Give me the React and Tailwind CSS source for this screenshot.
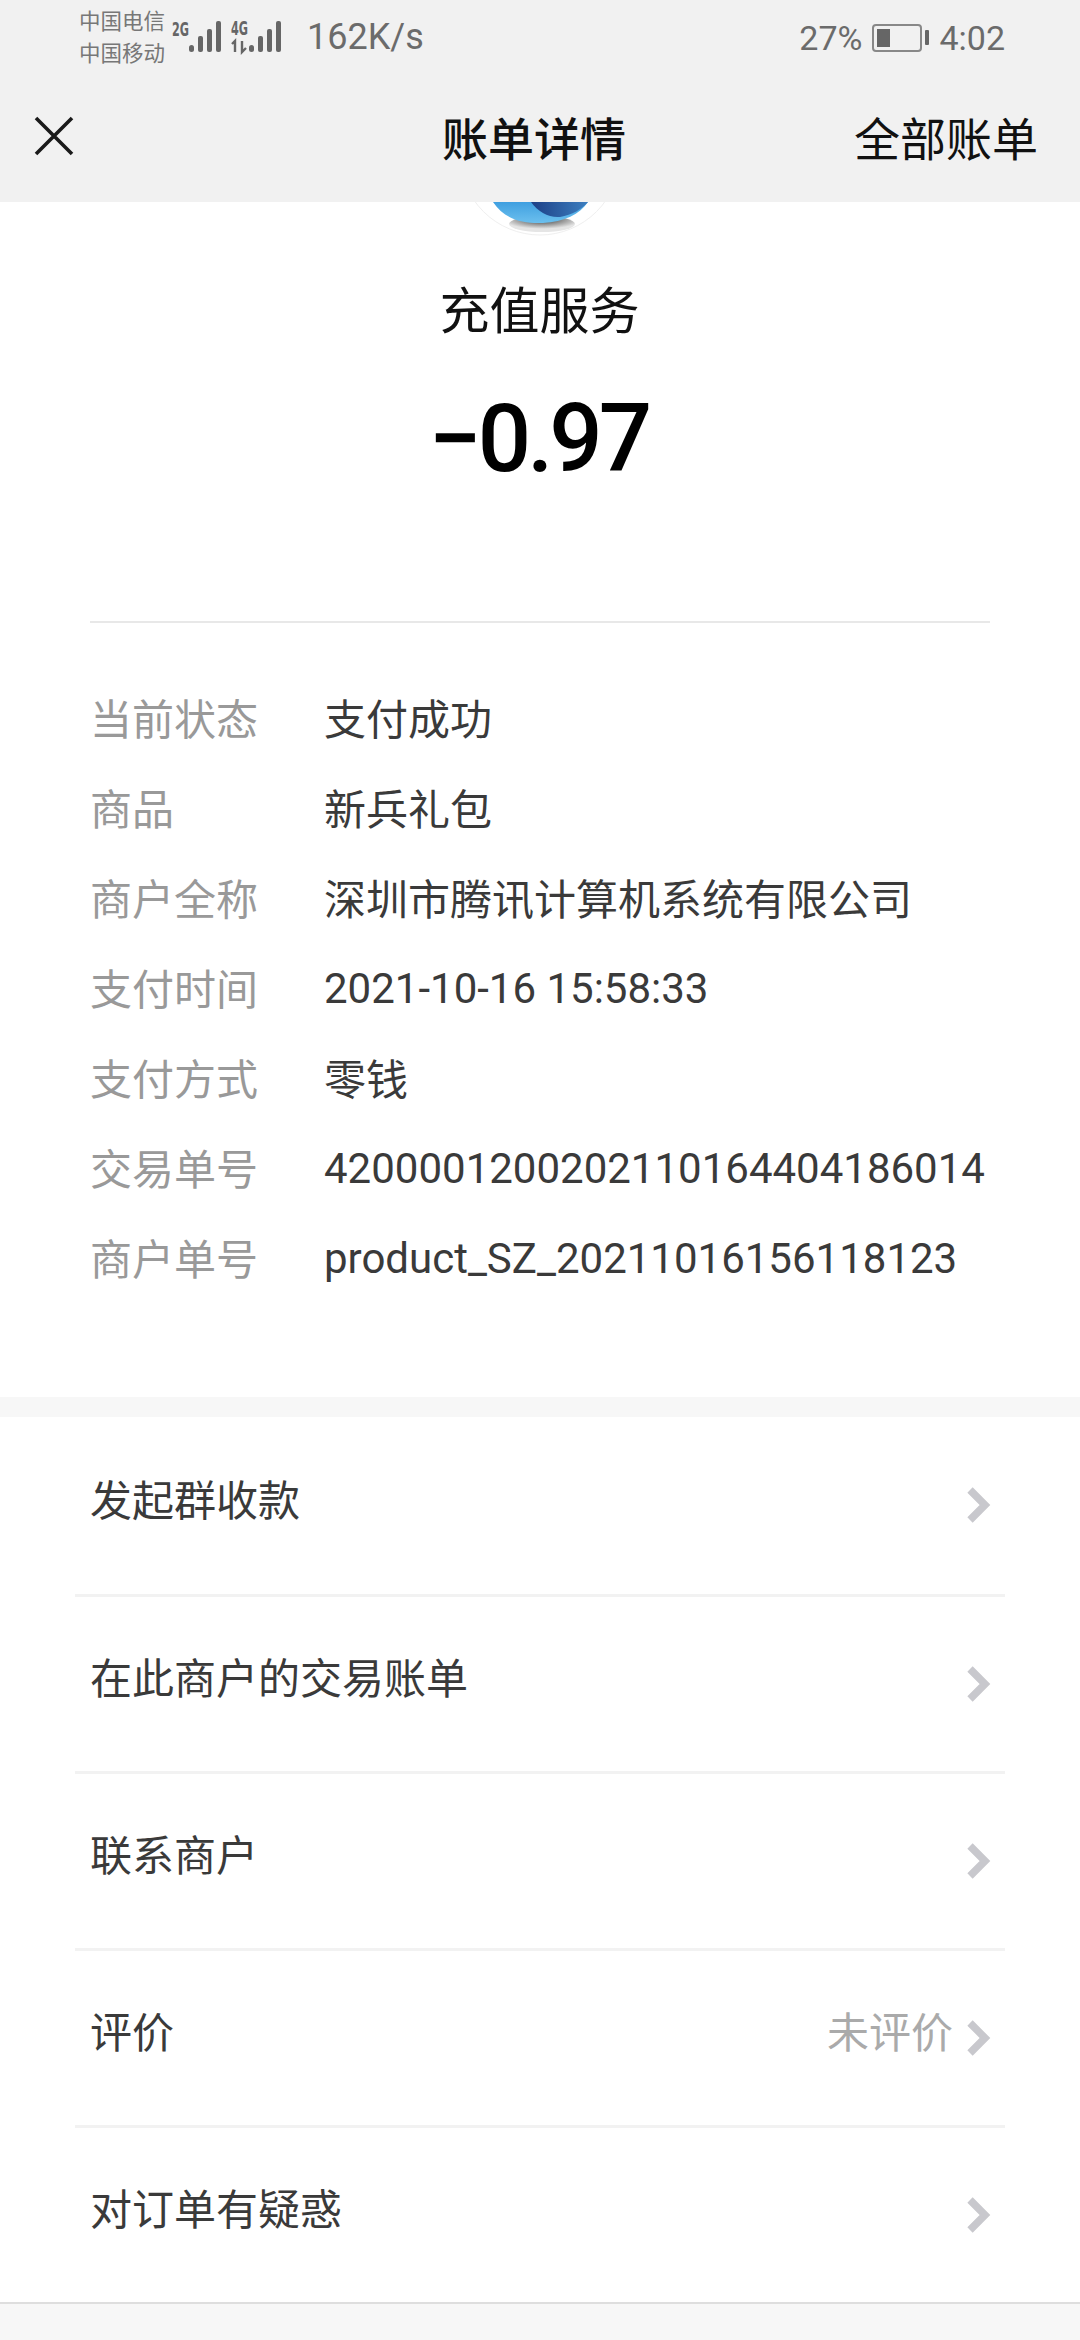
const cjk = { fontFamily: '"Noto Sans CJK SC", Roboto, sans-serif' };
const lat = { fontFamily: 'Roboto, "Noto Sans CJK SC", sans-serif' };

function Bars({ x = 0 }) {
  return (
    <g transform={`translate(${x} 0)`} fill="#666">
      <rect x={0} y={45} width={5} height={7} rx={2.5} />
      <rect x={9} y={36} width={5} height={16} rx={2} />
      <rect x={18} y={29} width={5} height={23} rx={2} />
      <rect x={27} y={21} width={5} height={31} rx={2} />
    </g>
  );
}

function StatusBar() {
  return (
    <div className="h-[75px] relative flex items-center text-[#666]">
      <div className="ml-[79px] w-[92px] flex flex-col text-[21.5px] leading-[32px] text-[#777] mb-[3px]" style={cjk}>
        <span className="whitespace-nowrap">中国电信</span>
        <span className="whitespace-nowrap">中国移动</span>
      </div>
      <svg width="110" height="75" viewBox="165 0 110 75" className="shrink-0">
        <text x="166" y="36" fontSize="20" fontWeight="700" fill="#666" textLength="17" lengthAdjust="spacingAndGlyphs" fontFamily="DejaVu Sans Condensed">2G</text>
        <Bars x={183} />
        <text x="225" y="35" fontSize="19" fontWeight="700" fill="#666" textLength="17" lengthAdjust="spacingAndGlyphs" fontFamily="DejaVu Sans Condensed">4G</text>
        <path d="M229 52V41L226 44M236 41V52L240 48" stroke="#666" strokeWidth="2.4" fill="none" />
        <Bars x={243} />
      </svg>
      <span className="ml-[26px] text-[36px] leading-none text-[#6b6b6b] mb-[1px]" style={lat}>162K/s</span>
      <div className="ml-auto mr-[75px] flex items-center">
        <span className="text-[34px] leading-none text-[#6b6b6b]" style={lat}>27%</span>
        <div className="ml-[10px] w-[50px] h-[28px] rounded-[4px] border-2 border-[#888] p-[3px] flex">
          <div className="w-[13px] bg-[#666]" />
        </div>
        <div className="ml-[3px] w-[4px] h-[15px] bg-[#666] rounded-[1px]" />
        <span className="ml-[10px] text-[34px] leading-none text-[#6b6b6b]" style={lat}>4:02</span>
      </div>
    </div>
  );
}

function NavBar() {
  return (
    <div className="h-[127px] relative flex items-center justify-between pl-[34px] pr-[42px] pb-[6px]">
      <svg width="40" height="40" viewBox="0 0 40 40" className="shrink-0">
        <path d="M2 2L38 38M38 2L2 38" stroke="#1a1a1a" strokeWidth="3.6" fill="none" />
      </svg>
      <span className="absolute left-[442px] text-[46px] leading-none font-medium text-[#111]" style={cjk}>账单详情</span>
      <span className="text-[46px] leading-none text-[#111]" style={cjk}>全部账单</span>
    </div>
  );
}

function Logo() {
  return (
    <div className="h-[34px] overflow-hidden flex justify-center">
      <svg width="170" height="34" viewBox="457 202 170 34" className="shrink-0">
        <defs>
          <linearGradient id="lb" x1="0" y1="0" x2="0" y2="1">
            <stop offset="0" stopColor="#3f9fe0" />
            <stop offset="1" stopColor="#6cc0ee" />
          </linearGradient>
          <linearGradient id="db" x1="0" y1="0" x2="1" y2="0">
            <stop offset="0" stopColor="#1c3f86" />
            <stop offset="1" stopColor="#3d7fc0" />
          </linearGradient>
          <radialGradient id="sh" cx="0.5" cy="0.2" r="0.6">
            <stop offset="0" stopColor="#333" />
            <stop offset="1" stopColor="#e5e5e5" />
          </radialGradient>
        </defs>
        <circle cx="542" cy="155" r="80" fill="#fff" stroke="#efefef" strokeWidth="1" />
        <ellipse cx="544" cy="224" rx="33" ry="8" fill="url(#sh)" />
        <path d="M495 202C506 219 525 224 545 223C566 222 582 214 590 202Z" fill="url(#lb)" />
        <path d="M533 202C540 212 551 218 562 217C574 215 584 209 590 202Z" fill="url(#db)" />
      </svg>
    </div>
  );
}

const details = [
  ['当前状态', '支付成功'],
  ['商品', '新兵礼包'],
  ['商户全称', '深圳市腾讯计算机系统有限公司'],
  ['支付时间', '2021-10-16 15:58:33'],
  ['支付方式', '零钱'],
  ['交易单号', '4200001200202110164404186014'],
  ['商户单号', 'product_SZ_20211016156118123'],
];

const rows = [
  ['发起群收款'],
  ['在此商户的交易账单'],
  ['联系商户'],
  ['评价', '未评价'],
  ['对订单有疑惑'],
];

function Chevron() {
  return (
    <svg width="24" height="36" viewBox="0 0 24 36" className="shrink-0 ml-[2px] -mr-[2px]">
      <path d="M3 3L18 18L3 33" stroke="#c8c8cd" strokeWidth="7.5" fill="none" />
    </svg>
  );
}

export default function App() {
  return (
    <div className="w-[1080px] h-[2340px] overflow-hidden bg-white flex flex-col" style={cjk}>
      <div className="bg-[#f1f1f1] h-[202px] shrink-0">
        <StatusBar />
        <NavBar />
      </div>
      <Logo />
      <div className="mt-[38px] text-center text-[50px] leading-[66px] text-[#111] pr-[1px]">充值服务</div>
      <div className="mt-[49px] h-[100px] flex items-center justify-center text-[94px] leading-none font-medium text-black tracking-[-4px] pr-[3px]" style={lat}>−0.97</div>
      <div className="mx-[90px] mt-[132px] h-[2px] bg-[#e8e8e8]" />
      <div className="ml-[90px] mt-[49px] flex flex-col">
        {details.map(([k, v]) => {
          const latin = /[a-z0-9]/.test(v);
          return (
            <div key={k} className="h-[90px] flex items-center text-[42px] leading-none">
              <span className="w-[234px] shrink-0 text-[#999]">{k}</span>
              <span className={`text-[#3a3a3a] whitespace-nowrap ${latin ? 'mt-[3px]' : ''}`} style={latin ? lat : cjk}>{v}</span>
            </div>
          );
        })}
      </div>
      <div className="mt-[95px] h-[20px] bg-[#f7f7f7] shrink-0" />
      <div className="flex flex-col">
        {rows.map(([k, v], i) => (
          <div key={k} className={`mx-[75px] pl-[15px] pr-[16px] ${i === 4 ? 'h-[174px]' : i === 0 ? 'h-[180px] border-b-[3px] border-[#f2f2f2]' : 'h-[177px] border-b-[3px] border-[#f2f2f2]'} flex items-center text-[42px] leading-none`}>
            <span className="text-[#3a3a3a] mb-[16px]">{k}</span>
            {v && <span className="ml-auto mr-[12px] text-[#aaa] mb-[16px]">{v}</span>}
            <span className={`mb-[1px] ${v ? '' : 'ml-auto'}`}><Chevron /></span>
          </div>
        ))}
      </div>
      <div className="flex-1 bg-[#f7f7f7] border-t-2 border-[#dedede]" />
    </div>
  );
}
